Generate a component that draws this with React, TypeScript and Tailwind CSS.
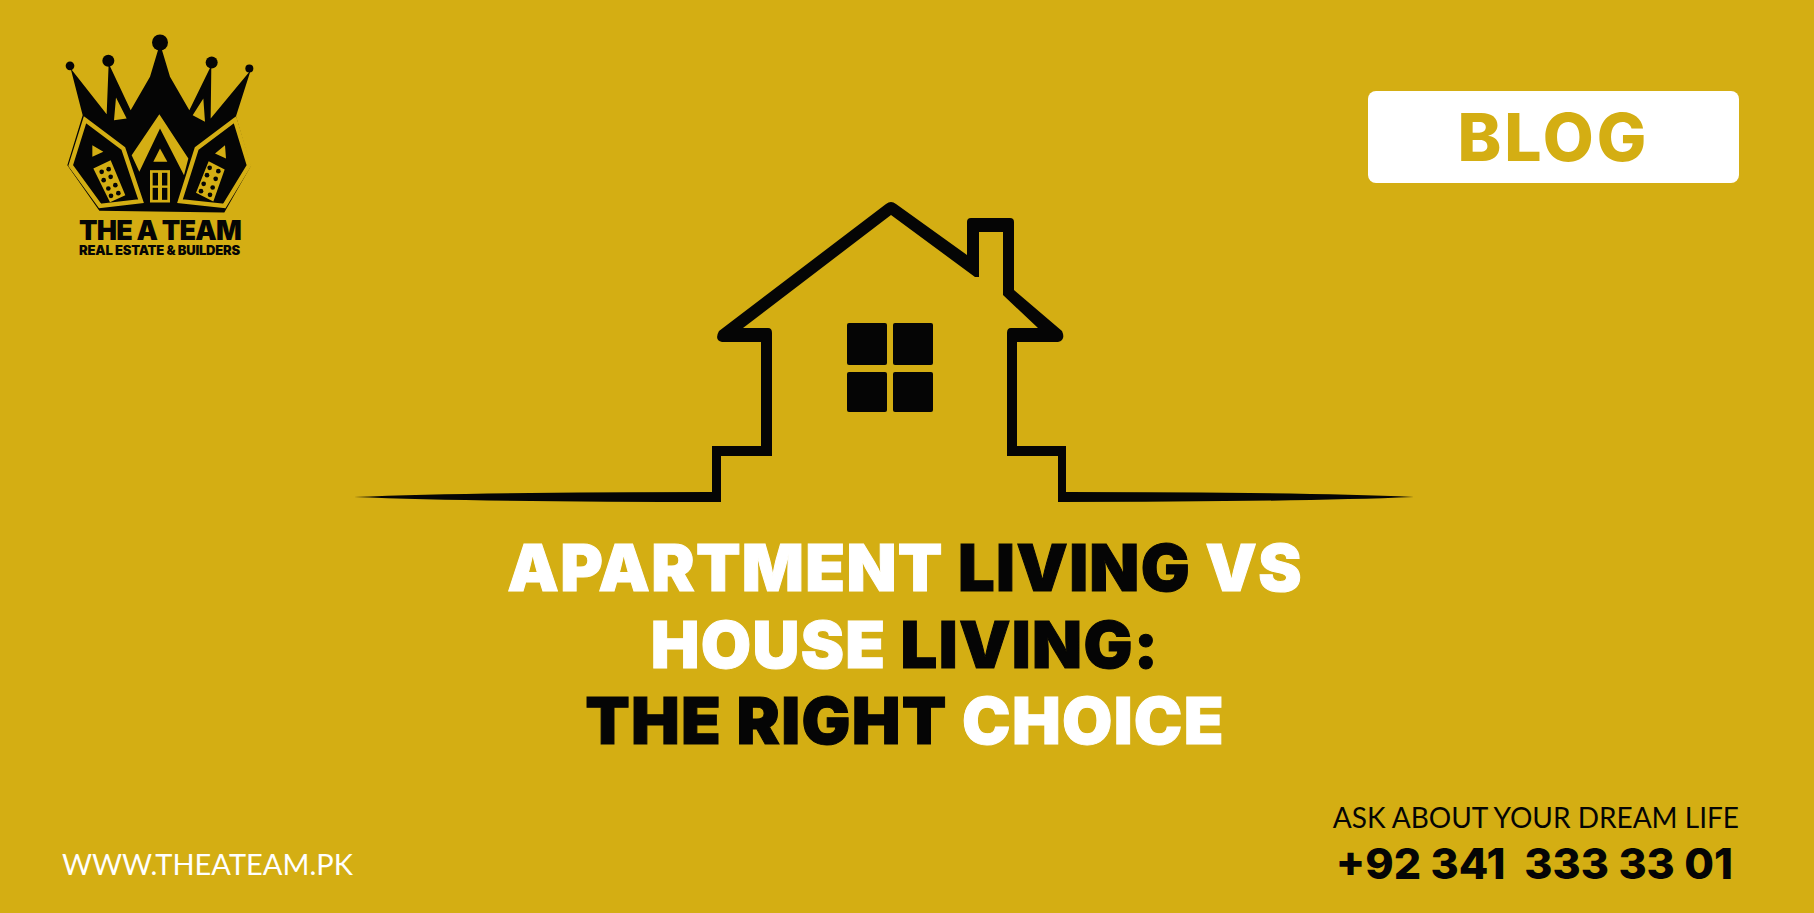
import React from 'react';

const Logo = () => (
  <svg viewBox="0 0 720 590" className="block w-[240px] h-[197px]">
    {/* crown balls */}
    <circle cx="360" cy="67" r="24" fill="#050505" />
    <circle cx="205" cy="122" r="18" fill="#050505" />
    <circle cx="515" cy="127" r="18" fill="#050505" />
    <circle cx="90" cy="137" r="13" fill="#050505" />
    <circle cx="628" cy="145" r="12" fill="#050505" />
    {/* silhouette */}
    <path
      d="M92 145 L200 282 L206 130 L272 270 L330 170 L360 70 L390 170 L448 270 L514 135 L512 295 L632 150 L588 288 L632 438 L553 577 L178 572 L82 435 L128 285 Z"
      fill="#050505"
    />
    {/* yellow gaps between spikes */}
    <path d="M228 232 L260 295 L222 300 Z M490 235 L495 305 L458 285 Z" fill="#d4ae13" />
    {/* side houses */}
    <path
      d="M135 299 L250 385 L303 543 L180 557 L92 436 Z M585 299 L470 385 L420 543 L553 557 L627 436 Z"
      fill="none"
      stroke="#d4ae13"
      strokeWidth="13"
      strokeLinejoin="miter"
    />
    {/* centre gable */}
    <path d="M358 282 L445 415 L432 465 L360 325 L298 455 L275 405 Z" fill="#d4ae13" />
    <path d="M360 385 L382 425 L340 425 Z" fill="#d4ae13" />
    <path d="M157 375 L190 395 L157 410 Z M555 375 L558 415 L525 400 Z" fill="#d4ae13" />
    {/* centre door */}
    <rect x="330" y="450" width="60" height="97" fill="#d4ae13" />
    <rect x="338" y="458" width="16" height="38" fill="#050505" />
    <rect x="366" y="458" width="16" height="38" fill="#050505" />
    <rect x="338" y="503" width="16" height="36" fill="#050505" />
    <rect x="366" y="503" width="16" height="36" fill="#050505" />
    {/* side windows */}
    <path d="M160 445 L212 420 L256 525 L210 546 Z M506 423 L554 448 L520 544 L468 518 Z" fill="#d4ae13" />
    <g fill="#050505">
      <circle cx="185" cy="455" r="7" />
      <circle cx="206" cy="447" r="7" />
      <circle cx="191" cy="480" r="7" />
      <circle cx="212" cy="470" r="7" />
      <circle cx="205" cy="505" r="7" />
      <circle cx="226" cy="495" r="7" />
      <circle cx="213" cy="527" r="7" />
      <circle cx="235" cy="519" r="7" />
      <circle cx="509" cy="443" r="7" />
      <circle cx="535" cy="453" r="7" />
      <circle cx="501" cy="465" r="7" />
      <circle cx="527" cy="476" r="7" />
      <circle cx="491" cy="491" r="7" />
      <circle cx="518" cy="502" r="7" />
      <circle cx="483" cy="513" r="7" />
      <circle cx="510" cy="524" r="7" />
    </g>
  </svg>
);

const House = () => (
  <svg viewBox="354 201 1060 302" className="block w-[1060px] h-[302px] ml-[354px] -mt-[55px]">
    <path
      d="M354 497 Q480 492 712 492 L712 446 L761 446 L761 342 L722 342 Q714 340 719 331 L886 204 Q891 200 896 204 L967 255 L967 222 Q967 218 971 218 L1010 218 Q1014 218 1014 222 L1014 290 L1062 331 Q1066 340 1058 342 L1017 342 L1017 446 L1066 446 L1066 492 Q1290 492 1414 497 Q1290 502 1058 502 L1058 456 L1007 456 L1007 333 Q1007 328 1011 328 L1038 328 L1003 295 L1003 232 L979 232 L979 277 L975 277 L891 215 L743 328 L768 328 Q772 328 772 333 L772 456 L721 456 L721 502 Q480 502 354 497 Z"
      fill="#050505"
    />
    <g fill="#050505">
      <rect x="847" y="323" width="40" height="42" rx="2" />
      <rect x="893" y="323" width="40" height="42" rx="2" />
      <rect x="847" y="372" width="40" height="40" rx="2" />
      <rect x="893" y="372" width="40" height="40" rx="2" />
    </g>
  </svg>
);

export default function App() {
  return (
    <div className="w-full h-[913px] overflow-hidden bg-[#d4ae13] flex flex-col font-['Inter',sans-serif]">
      {/* Logo and badge */}
      <div className="flex justify-between items-start pt-[20px] pl-[40px] pr-[75px] h-[256px]">
        <div className="w-[240px]">
          <Logo />
          <div className="pl-[39px] text-[#050505] font-black leading-none whitespace-nowrap">
            <div className="text-[27px] tracking-[-0.8px] h-[27px] leading-[27px]">THE A TEAM</div>
            <div className="text-[13px] tracking-[-0.2px] leading-[12px]">REAL ESTATE &amp; BUILDERS</div>
          </div>
        </div>
        <div className="mt-[71px] w-[371px] h-[92px] bg-white rounded-lg flex items-center justify-center">
          <span className="text-[66px] tracking-[3px] font-extrabold text-[#d4ae13] leading-none">BLOG</span>
        </div>
      </div>

      <House />

      {/* Title */}
      <div className="mt-[27px] pr-[4px] text-center text-[65px] tracking-[1.3px] leading-[76.5px] font-black whitespace-nowrap text-[#050505] [-webkit-text-stroke:1px]">
        <div>
          <span className="text-white">APARTMENT</span> LIVING <span className="text-white">VS</span>
        </div>
        <div>
          <span className="text-white">HOUSE</span> LIVING:
        </div>
        <div>
          THE RIGHT <span className="text-white">CHOICE</span>
        </div>
      </div>

      {/* Footer */}
      <div className="flex justify-between items-end pl-[62px] pr-[75px] mt-[39px]">
        <div className="text-white text-[29px] leading-none font-['Lato',sans-serif] pb-[8px] whitespace-nowrap">WWW.THEATEAM.PK</div>
        <div className="text-[#050505] text-right whitespace-nowrap">
          <div className="text-[28px] leading-[36px] font-['Lato',sans-serif] pb-[5px]">ASK ABOUT YOUR DREAM LIFE</div>
          <div className="text-[43px] leading-[46px] font-extrabold whitespace-pre pr-[6px]">+92 341  333 33 01</div>
        </div>
      </div>
    </div>
  );
}
